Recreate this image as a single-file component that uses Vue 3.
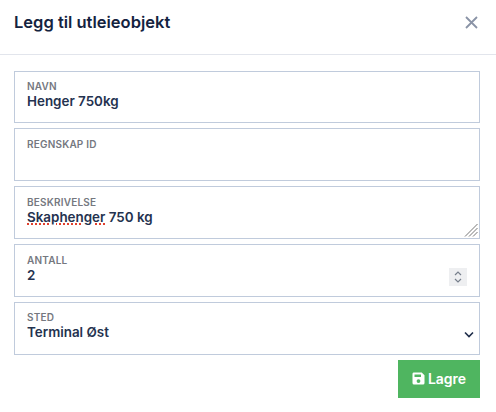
<script setup>
const saved = 'Lagre'
</script>

<template>
  <div class="modal">
    <header class="head">
      <h1 class="title">Legg til utleieobjekt</h1>
      <svg class="close" width="13" height="13" viewBox="0 0 13 13">
        <path d="M1 1 L12 12 M12 1 L1 12" stroke="#8a93a6" stroke-width="1.8" fill="none" />
      </svg>
    </header>
    <form class="form" @submit.prevent>
      <div class="field">
        <div class="label">NAVN</div>
        <div class="value">Henger 750kg</div>
      </div>
      <div class="field">
        <div class="label">REGNSKAP ID</div>
        <div class="value"></div>
      </div>
      <div class="field">
        <div class="label">BESKRIVELSE</div>
        <div class="value"><span class="spell">Skaphenger</span> 750 kg</div>
        <svg class="resize" width="14" height="14" viewBox="0 0 14 14">
          <path d="M13.5 1 L1 13.5 M13.5 5 L5 13.5 M13.5 9 L9 13.5" stroke="#777" stroke-width="1" fill="none" />
        </svg>
      </div>
      <div class="field">
        <div class="label">ANTALL</div>
        <div class="value">2</div>
        <div class="spin">
          <svg width="10" height="16" viewBox="0 0 10 16">
            <path d="M2 6 L5 3 L8 6 M2 10 L5 13 L8 10" stroke="#777f8c" stroke-width="1.2" fill="none" />
          </svg>
        </div>
      </div>
      <div class="field">
        <div class="label">STED</div>
        <div class="value">Terminal Øst</div>
        <svg class="caret" width="10" height="7" viewBox="0 0 10 7">
          <path d="M1 1.5 L5 5.5 L9 1.5" stroke="#1f2d4a" stroke-width="1.6" fill="none" />
        </svg>
      </div>
      <div class="actions">
        <button class="save" type="submit">
          <svg width="13" height="13" viewBox="0 0 13 13">
            <path fill="#fff" fill-rule="evenodd" d="M1.5 0.5 H9.7 L12.5 3.3 V11 A1.5 1.5 0 0 1 11 12.5 H2 A1.5 1.5 0 0 1 0.5 11 V2 A1.5 1.5 0 0 1 1.5 0.5 Z M2.5 2.5 V5 H9 V2.5 Z M6.5 7.2 A1.9 1.9 0 1 0 6.5 11 A1.9 1.9 0 1 0 6.5 7.2 Z" />
          </svg>
          <span>{{ saved }}</span>
        </button>
      </div>
    </form>
  </div>
</template>

<style scoped>
.modal {
  width: 496px;
  height: 412px;
  background: #fff;
  font-family: "Inter", "Noto Sans", sans-serif;
  color: #1c2b4a;
  box-sizing: border-box;
}
.head {
  height: 55px;
  box-sizing: border-box;
  border-bottom: 1px solid #e2e5ec;
  display: flex;
  align-items: center;
  justify-content: space-between;
  padding: 0 18px 10px 14px;
}
.title {
  margin: 0;
  font-size: 16.5px;
  font-weight: 600;
  color: #14233f;
}
.form {
  padding: 15.6px 16px 0 14px;
  display: flex;
  flex-direction: column;
  gap: 5px;
}
.field {
  position: relative;
  height: 52.8px;
  box-sizing: border-box;
  border: 1px solid #c0cbdc;
  padding: 8.6px 12px 0;
}
.label {
  font-size: 10px;
  line-height: 13px;
  font-weight: 600;
  color: #75787f;
  letter-spacing: 0.2px;
}
.value {
  font-size: 13.4px;
  line-height: 17px;
  font-weight: 600;
  color: #24324f;
  min-height: 17px;
}
.spell {
  text-decoration: underline dotted #e0402e 1.5px;
  text-underline-offset: 2px;
}
.resize {
  position: absolute;
  right: 1px;
  bottom: 1px;
}
.spin {
  position: absolute;
  right: 12px;
  top: 23px;
  width: 18px;
  height: 18px;
  background: #eeeff1;
  display: flex;
  align-items: center;
  justify-content: center;
}
.caret {
  position: absolute;
  right: 5px;
  top: 28px;
}
.actions {
  display: flex;
  justify-content: flex-end;
}
.save {
  width: 82px;
  height: 38px;
  border: 0;
  background: #4fb560;
  color: #fff;
  font: 600 14px "Inter", "Noto Sans", sans-serif;
  display: flex;
  align-items: center;
  justify-content: center;
  gap: 3px;
  padding: 0;
}
</style>
